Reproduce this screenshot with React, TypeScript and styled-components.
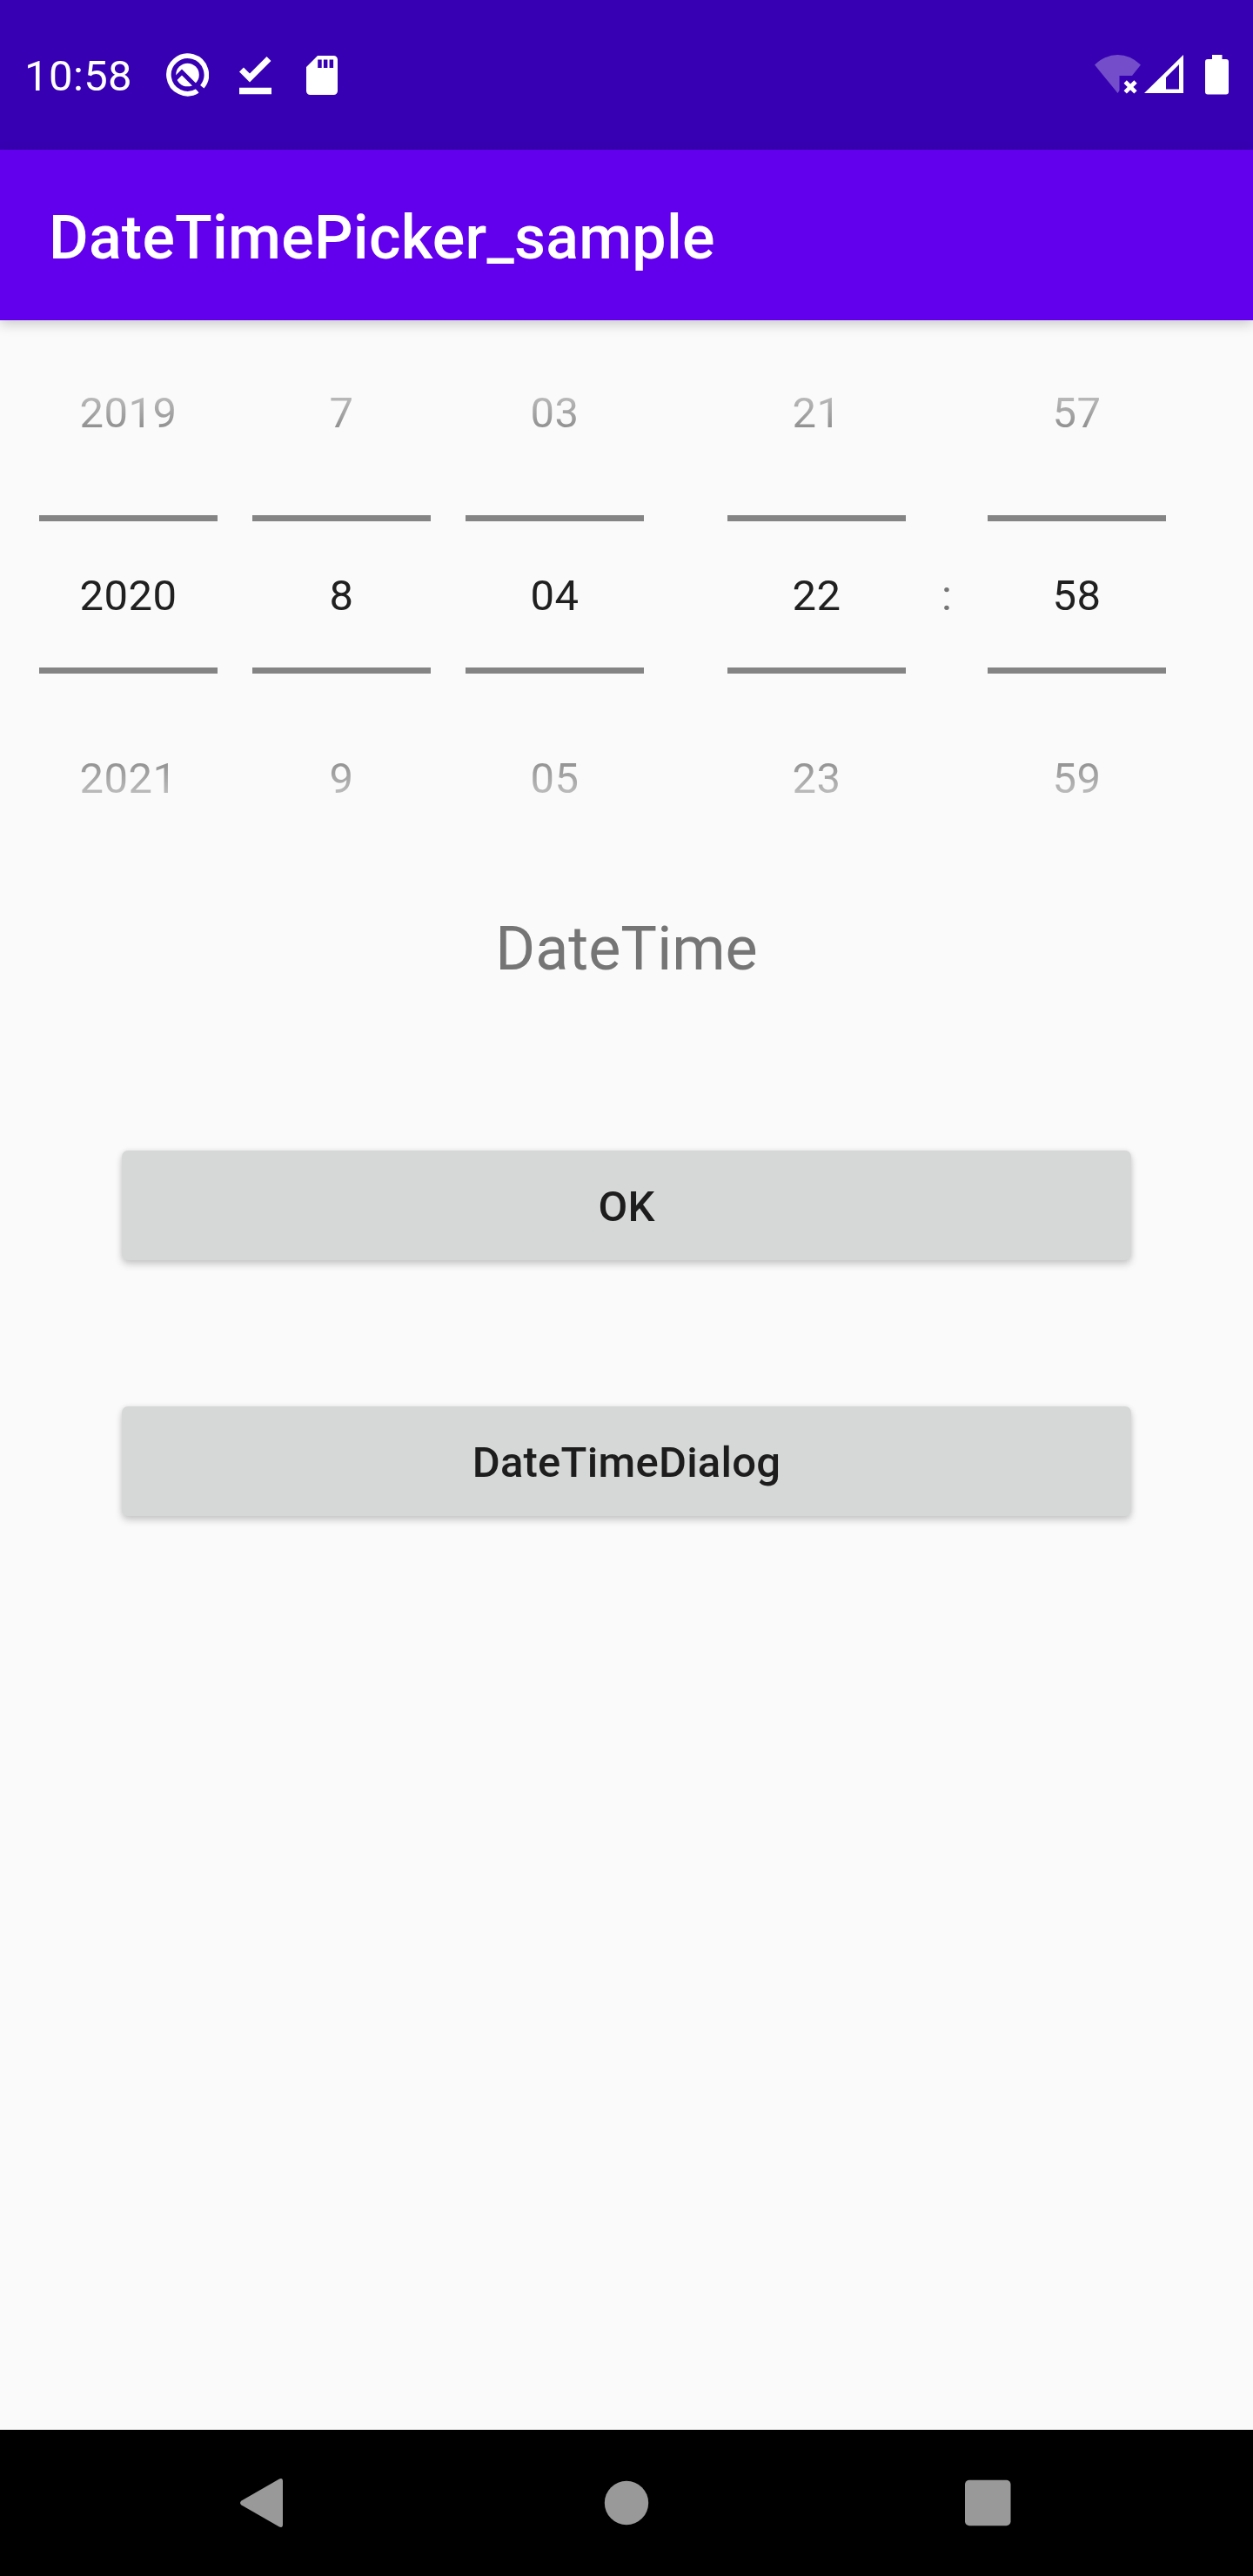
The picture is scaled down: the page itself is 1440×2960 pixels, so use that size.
import React from "react";
import styled, { createGlobalStyle } from "styled-components";

const GlobalStyle = createGlobalStyle`
  * { box-sizing: border-box; }
  body { margin: 0; background: #fafafa; }
`;

const Screen = styled.div`
  display: flex;
  flex-direction: column;
  width: 1440px;
  height: 2960px;
  background: #fafafa;
  font-family: Roboto, sans-serif;
  font-size: 49px;
  color: #202020;
  overflow: hidden;
`;

const StatusBar = styled.header`
  display: flex;
  align-items: center;
  justify-content: space-between;
  height: 172px;
  flex: none;
  padding: 0 28px;
  background: #3700b3;
  color: #fff;
`;

const StatusGroup = styled.div`
  display: flex;
  align-items: center;
  height: 172px;
`;

const Clock = styled.span`
  width: 163px;
  line-height: 60px;
  padding-top: 4px;
  letter-spacing: 0.4px;
`;

const Glyph = styled.svg<{ $w: number; $gap?: number }>`
  display: block;
  flex: none;
  width: ${(p) => p.$w}px;
  height: 62px;
  margin-left: ${(p) => p.$gap ?? 0}px;
`;

const AppBar = styled.div`
  display: flex;
  align-items: center;
  height: 196px;
  flex: none;
  padding: 6px 56px 0;
  background: #6200ee;
  box-shadow: 0 4px 14px rgba(0, 0, 0, 0.2);
  z-index: 1;
`;

const Title = styled.h1`
  margin: 0;
  font-size: 70px;
  font-weight: 500;
  line-height: 82px;
  letter-spacing: 0.22px;
  color: #fff;
`;

const Content = styled.main`
  display: flex;
  flex-direction: column;
  align-items: center;
  flex: 1;
`;

const PickerRow = styled.div`
  display: flex;
  align-self: stretch;
  align-items: center;
  height: 630px;
  padding-left: 45px;
`;

const Wheel = styled.div<{ $before?: number }>`
  display: flex;
  flex-direction: column;
  width: 205px;
  height: 630px;
  margin-left: ${(p) => p.$before ?? 0}px;
  text-align: center;
  letter-spacing: 0.5px;
`;

const Neighbour = styled.div<{ $side: "top" | "bottom" }>`
  height: 224px;
  padding-top: ${(p) => (p.$side === "top" ? 77 : 91)}px;
  line-height: 60px;
  background: linear-gradient(
    ${(p) => (p.$side === "top" ? "to bottom" : "to top")},
    #fafafa 32px,
    #202020 221px
  );
  background-clip: text;
  color: transparent;
`;

const Selected = styled.div`
  height: 182px;
  padding-top: 56px;
  border-top: 7px solid #848484;
  border-bottom: 7px solid #848484;
  line-height: 60px;
`;

const Colon = styled.div`
  width: 94px;
  padding-top: 4px;
  text-align: center;
  color: #757575;
  line-height: 60px;
`;

const Result = styled.div`
  margin-top: 51px;
  font-size: 70px;
  line-height: 82px;
  color: #757575;
`;

const RaisedButton = styled.button<{ $before: number }>`
  width: 1160px;
  height: 126px;
  margin-top: ${(p) => p.$before}px;
  padding: 4px 0 0;
  border: 0;
  border-radius: 7px;
  background: #d6d8d7;
  box-shadow: 0 5px 8px rgba(0, 0, 0, 0.18), 0 0 6px rgba(0, 0, 0, 0.08);
  font: 500 49px/60px Roboto, sans-serif;
  letter-spacing: 0.25px;
  color: #1d1d1d;
`;

const NavBar = styled.nav`
  display: flex;
  align-items: center;
  justify-content: space-between;
  height: 168px;
  flex: none;
  padding: 0 270px;
  background: #000;
`;

const NavIcon = styled.svg`
  display: block;
  width: 70px;
  height: 70px;
  fill: #999;
`;

type WheelData = { before: number; values: [string, string, string] };

const dateWheels: WheelData[] = [
  { before: 0, values: ["2019", "2020", "2021"] },
  { before: 40, values: ["7", "8", "9"] },
  { before: 40, values: ["03", "04", "05"] },
  { before: 96, values: ["21", "22", "23"] },
];

const NumberWheel = ({ before, values }: WheelData) => (
  <Wheel $before={before}>
    <Neighbour $side="top">{values[0]}</Neighbour>
    <Selected>{values[1]}</Selected>
    <Neighbour $side="bottom">{values[2]}</Neighbour>
  </Wheel>
);

export default function App() {
  return (
    <>
      <GlobalStyle />
      <Screen>
        <StatusBar>
          <StatusGroup>
            <Clock>10:58</Clock>
            <Glyph $w={49} viewBox="0 0 49 62" fill="none">
              <path d="M41.3 44.800A21.700 21.700 0 1 0 36 49.400" stroke="#fff" strokeWidth="5.600" />
              <circle cx="24.5" cy="31" r="13.3" fill="#fff" />
              <path d="M10.500 35.500 18 28 38 48" stroke="#3700b3" strokeWidth="5" />
            </Glyph>
            <Glyph $w={37} $gap={35} viewBox="0 0 37 62" fill="none" stroke="#fff">
              <path d="M2.5 25 12 34.5 34 12.5" strokeWidth="7" />
              <path d="M0 49.5H37" strokeWidth="7.5" />
            </Glyph>
            <Glyph $w={36} $gap={40} viewBox="0 0 36 62">
              <path
                fill="#fff"
                fillRule="evenodd"
                d="M13 9H31.500a4.500 4.500 0 0 1 4.500 4.500V49.500a4.500 4.500 0 0 1-4.500 4.500H4.500A4.500 4.500 0 0 1 0 49.500V22ZM13.200 13.500V23H17.700V13.500ZM19.900 13.500V23H24.400V13.500ZM26.600 13.500V23H31.100V13.500Z"
              />
            </Glyph>
          </StatusGroup>
          <StatusGroup>
            <Glyph $w={53} viewBox="0 0 53 62">
              <path fill="#fff" fillOpacity="0.3" d="M0 19.500Q12 8 26.500 8T53 19.500L43 32H28.500V49L26.500 52Z" />
              <path stroke="#fff" strokeWidth="4.700" d="m35.200 39 11.800 11.800m0-11.800-11.800 11.800" />
            </Glyph>
            <Glyph $w={45} $gap={4} viewBox="0 0 45 62">
              <path fill="#fff" fillRule="evenodd" d="M45 8V52H0ZM40 19 25 34V47.500H40Z" />
            </Glyph>
            <Glyph $w={27} $gap={25} viewBox="0 0 27 62">
              <path
                fill="#fff"
                d="M8 8H19.500V13H24a3 3 0 0 1 3 3V50.500a3 3 0 0 1-3 3H3a3 3 0 0 1-3-3V16a3 3 0 0 1 3-3H8Z"
              />
            </Glyph>
          </StatusGroup>
        </StatusBar>
        <AppBar>
          <Title>DateTimePicker_sample</Title>
        </AppBar>
        <Content>
          <PickerRow>
            {dateWheels.map((w) => (
              <NumberWheel key={w.values[0]} {...w} />
            ))}
            <Colon>:</Colon>
            <NumberWheel before={0} values={["57", "58", "59"]} />
          </PickerRow>
          <Result>DateTime</Result>
          <RaisedButton $before={191}>OK</RaisedButton>
          <RaisedButton $before={168}>DateTimeDialog</RaisedButton>
        </Content>
        <NavBar>
          <NavIcon viewBox="0 0 70 70">
            <path d="M7.500 32.500 51 7.500Q55 6 55 10V60Q55 64 51 62.500L7.500 37.500Q4.500 35 7.500 32.500Z" />
          </NavIcon>
          <NavIcon viewBox="0 0 70 70">
            <circle cx="35" cy="35" r="25.200" />
          </NavIcon>
          <NavIcon viewBox="0 0 70 70">
            <rect x="9" y="8.700" width="52.500" height="52.500" rx="5" />
          </NavIcon>
        </NavBar>
      </Screen>
    </>
  );
}
